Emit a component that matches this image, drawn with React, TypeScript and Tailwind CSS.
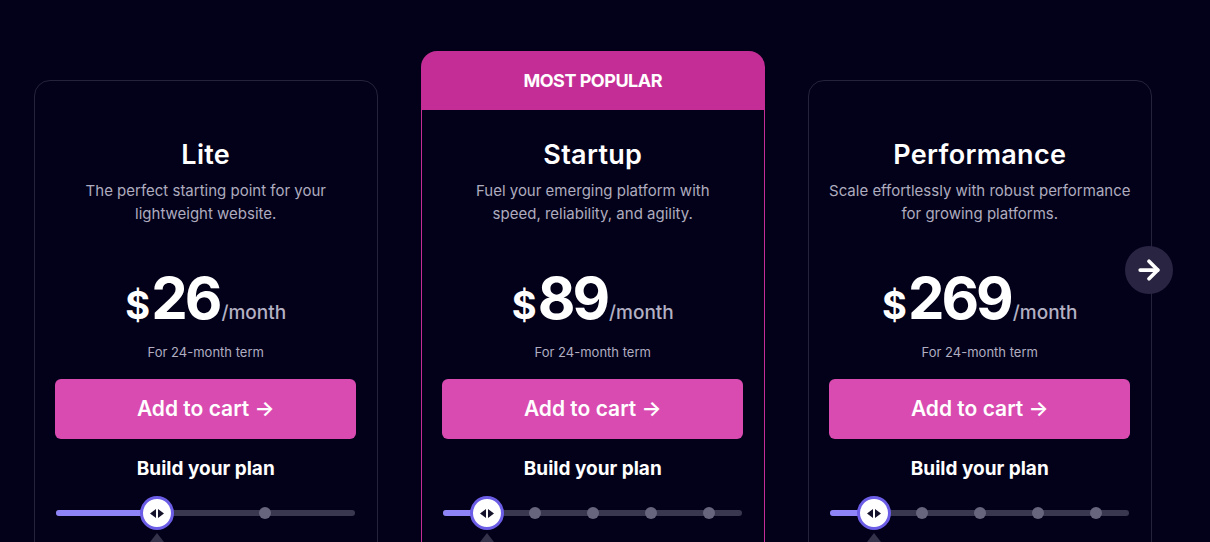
import { ArrowRight } from "lucide-react";

type Plan = {
  name: string;
  desc: [string, string];
  price: string;
  popular?: boolean;
  thumb: number;
  dots: number[];
};

const PLANS: Plan[] = [
  {
    name: "Lite",
    desc: ["The perfect starting point for your", "lightweight website."],
    price: "26",
    thumb: 101,
    dots: [209],
  },
  {
    name: "Startup",
    desc: ["Fuel your emerging platform with", "speed, reliability, and agility."],
    price: "89",
    popular: true,
    thumb: 44,
    dots: [92, 150, 208, 266],
  },
  {
    name: "Performance",
    desc: ["Scale effortlessly with robust performance", "for growing platforms."],
    price: "269",
    thumb: 44,
    dots: [92, 150, 208, 266],
  },
];

function Slider({ thumb, dots }: { thumb: number; dots: number[] }) {
  return (
    <div className="relative mt-[15px] h-[34px] w-[299px]">
      {/* track */}
      <div className="absolute left-0 right-0 top-[14px] h-[6px] rounded-full bg-[#393750]" />
      <div
        className="absolute left-0 top-[14px] h-[6px] rounded-full bg-[#8e84f7]"
        style={{ width: thumb }}
      />
      {dots.map((d) => (
        <div
          key={d}
          className="absolute top-[11px] h-[12px] w-[12px] -translate-x-1/2 rounded-full bg-[#67657d]"
          style={{ left: d }}
        />
      ))}
      {/* thumb */}
      <div
        className="absolute top-0 flex h-[34px] w-[34px] -translate-x-1/2 items-center justify-center gap-[2px] rounded-full border-[3px] border-[#6c5de6] bg-white"
        style={{ left: thumb }}
      >
        <svg width="6" height="9" viewBox="0 0 6 9">
          <path d="M6 0 L0 4.5 L6 9 Z" fill="#15122b" />
        </svg>
        <svg width="6" height="9" viewBox="0 0 6 9">
          <path d="M0 0 L6 4.5 L0 9 Z" fill="#15122b" />
        </svg>
      </div>
      {/* tooltip tip */}
      <div
        className="absolute top-[37px] h-0 w-0 -translate-x-1/2 border-x-[7px] border-b-[9px] border-x-transparent border-b-[#34314a]"
        style={{ left: thumb }}
      />
    </div>
  );
}

function PlanCard({ plan }: { plan: Plan }) {
  const body = (
    <div className="flex flex-col items-center px-[21px] pb-[80px]">
      <h2 className="text-[27px] font-semibold leading-[32px] tracking-[0.3px] text-white [font-family:Inter,sans-serif]">
        {plan.name}
      </h2>
      <p className="mt-[8px] whitespace-nowrap text-center text-[15px] leading-[23px] text-[#aeacbe] [font-family:Inter,sans-serif]">
        {plan.desc[0]}
        <br />
        {plan.desc[1]}
      </p>
      <div className="mt-[44px] flex h-[58px] items-baseline text-white [font-family:Inter,sans-serif]">
        <span className="text-[38px] font-bold leading-none tracking-[-1px]">$</span>
        <span className="ml-[2px] text-[58px] font-bold leading-none tracking-[-3px]">
          {plan.price}
        </span>
        <span className="ml-[2px] text-[19px] font-medium leading-none text-[#b3b1c3]">
          /month
        </span>
      </div>
      <p className="mt-[17px] text-[13px] leading-[16px] text-[#b0aec0] [font-family:Inter,sans-serif]">
        For 24-month term
      </p>
      <button
        type="button"
        className="mt-[19px] flex h-[60px] w-[301px] items-center justify-center rounded-[6px] bg-[#d94bb0] text-[21px] font-semibold text-white [font-family:Inter,sans-serif]"
      >
        Add to cart →
      </button>
      <p className="mt-[17px] text-[19px] font-bold leading-[25px] text-white [font-family:Inter,sans-serif]">
        Build your plan
      </p>
      <Slider thumb={plan.thumb} dots={plan.dots} />
    </div>
  );

  if (plan.popular) {
    return (
      <div className="w-[343.5px] shrink-0">
        <div className="flex h-[59px] items-center justify-center rounded-t-[16px] bg-[#c42d95] text-[18px] font-bold tracking-[-0.5px] text-white [font-family:Inter,sans-serif]">
          MOST POPULAR
        </div>
        <div className="border-x border-b border-[#c42d95] pt-[29px]">{body}</div>
      </div>
    );
  }

  return (
    <div className="mt-[29px] w-[343.5px] shrink-0 rounded-t-[16px] border border-[#25233c] pt-[58px]">
      {body}
    </div>
  );
}

export default function App() {
  return (
    <div className="relative h-[542px] w-full overflow-hidden bg-[#03011a]">
      <div className="flex items-start gap-[43.5px] pl-[34px] pt-[51px]">
        {PLANS.map((p) => (
          <PlanCard key={p.name} plan={p} />
        ))}
      </div>
      <button
        type="button"
        className="absolute left-[1125px] top-[246px] flex h-[48px] w-[48px] items-center justify-center rounded-full bg-[#2a2443] text-white"
      >
        <ArrowRight size={30} strokeWidth={3} />
      </button>
    </div>
  );
}
